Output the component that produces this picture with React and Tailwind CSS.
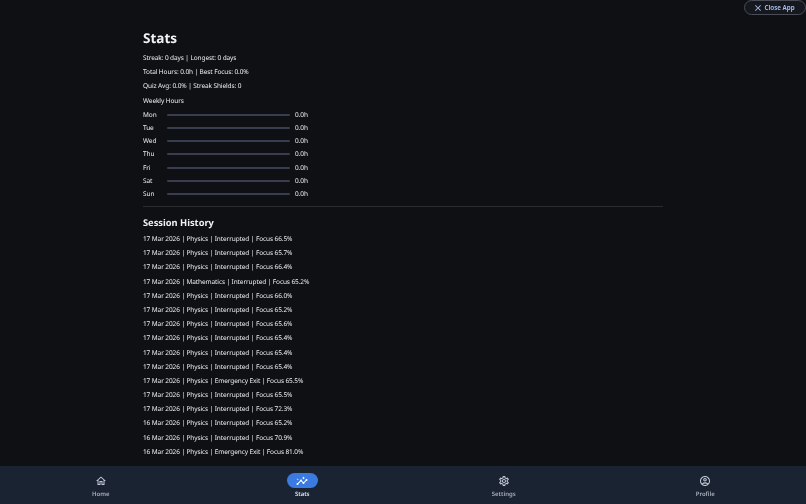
import { MdClose, MdOutlineHome, MdOutlineSettings, MdOutlineAccountCircle, MdInsights } from "react-icons/md";

const days = ["Mon", "Tue", "Wed", "Thu", "Fri", "Sat", "Sun"];
const sessions = [
  "17 Mar 2026 | Physics | Interrupted | Focus 66.5%",
  "17 Mar 2026 | Physics | Interrupted | Focus 65.7%",
  "17 Mar 2026 | Physics | Interrupted | Focus 66.4%",
  "17 Mar 2026 | Mathematics | Interrupted | Focus 65.2%",
  "17 Mar 2026 | Physics | Interrupted | Focus 66.0%",
  "17 Mar 2026 | Physics | Interrupted | Focus 65.2%",
  "17 Mar 2026 | Physics | Interrupted | Focus 65.6%",
  "17 Mar 2026 | Physics | Interrupted | Focus 65.4%",
  "17 Mar 2026 | Physics | Interrupted | Focus 65.4%",
  "17 Mar 2026 | Physics | Interrupted | Focus 65.4%",
  "17 Mar 2026 | Physics | Emergency Exit | Focus 65.5%",
  "17 Mar 2026 | Physics | Interrupted | Focus 65.5%",
  "17 Mar 2026 | Physics | Interrupted | Focus 72.3%",
  "16 Mar 2026 | Physics | Interrupted | Focus 65.2%",
  "16 Mar 2026 | Physics | Interrupted | Focus 70.9%",
  "16 Mar 2026 | Physics | Emergency Exit | Focus 81.0%",
];

function NavItem({ label, icon, active }) {
  return (
    <div className="flex flex-1 flex-col items-center">
      <div className={`flex h-[15px] w-[31px] items-center justify-center rounded-full ${active ? "bg-[#3b7ae0] text-white" : "text-[#c4cad4]"}`}>
        {icon}
      </div>
      <span className={`mt-[2px] text-[6px] leading-[9px] font-semibold ${active ? "text-[#e4e8ef]" : "text-[#a9b0bc]"}`}>{label}</span>
    </div>
  );
}

export default function App() {
  return (
    <div className="relative flex h-[504px] w-[806px] flex-col overflow-hidden bg-[#0f1014] text-[#eceef2] font-['Noto_Sans',sans-serif] [text-rendering:geometricPrecision] blur-[0.3px]">
      <button className="absolute right-0 top-0 flex h-[15px] w-[62px] items-center gap-[2px] rounded-full border border-[#4a4d55] bg-[#16181f] pl-[7.5px] text-[6.3px] font-semibold text-[#a9c4f5]">
        <MdClose size={10} />
        <span className="whitespace-nowrap">Close App</span>
      </button>
      <main className="mx-auto flex w-[520px] flex-1 flex-col pt-[28px]">
        <h1 className="text-[13.5px] leading-[20px] font-bold text-[#f1f2f4]">Stats</h1>
        <div className="mt-[5px] flex flex-col gap-[4.2px] text-[6.5px] leading-[10px] tracking-[-0.1px]">
          <p>Streak: 0 days | Longest: 0 days</p>
          <p>Total Hours: 0.0h | Best Focus: 0.0%</p>
          <p>Quiz Avg: 0.0% | Streak Shields: 0</p>
          <p>Weekly Hours</p>
        </div>
        <div className="mt-[4px] flex flex-col gap-[3.3px] text-[6.5px] leading-[10px] tracking-[-0.1px]">
          {days.map((d) => (
            <div key={d} className="flex items-center">
              <span className="w-[24px]">{d}</span>
              <div className="h-[2px] w-[123px] rounded-full bg-[#383d50]" />
              <span className="ml-[5px]">0.0h</span>
            </div>
          ))}
        </div>
        <div className="mt-[6.5px] h-px bg-[#2b2c30]" />
        <h2 className="mt-[9px] text-[9.3px] leading-[14px] font-bold text-[#f1f2f4]">Session History</h2>
        <div className="mt-[4.2px] flex flex-col gap-[4.2px] text-[6.5px] leading-[10px] tracking-[-0.1px]">
          {sessions.map((s, i) => (
            <p key={i}>{s}</p>
          ))}
        </div>
      </main>
      <nav className="flex h-[38px] items-start bg-[#1a2331] pt-[7px]">
        <NavItem label="Home" icon={<MdOutlineHome size={12} />} />
        <NavItem label="Stats" active icon={<MdInsights size={12} />} />
        <NavItem label="Settings" icon={<MdOutlineSettings size={12} />} />
        <NavItem label="Profile" icon={<MdOutlineAccountCircle size={12} />} />
      </nav>
    </div>
  );
}
